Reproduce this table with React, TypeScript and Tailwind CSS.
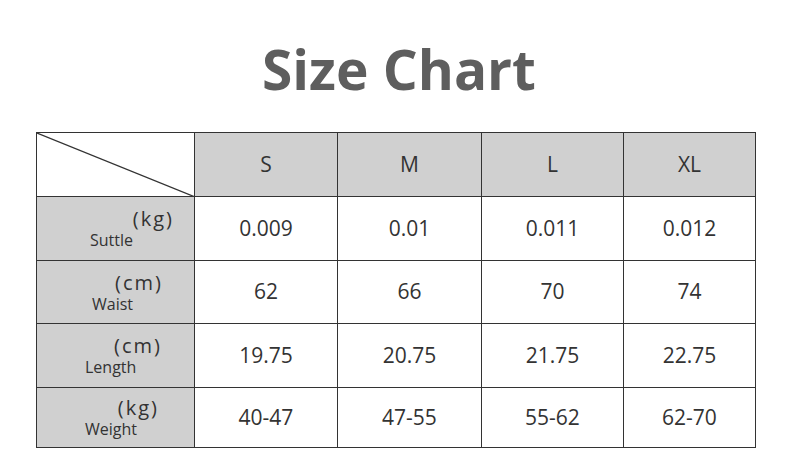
import React from "react";

const cols = ["S", "M", "L", "XL"];
const widths = ["w-[143px]", "w-[144px]", "w-[142px]", "w-[132px]"];

const rows = [
  { unit: "(kg)", label: "Suttle", h: "h-[64px]", unitPr: "pr-[20px]", labelPl: "pl-[53px]", values: ["0.009", "0.01", "0.011", "0.012"] },
  { unit: "(cm)", label: "Waist", h: "h-[63px]", unitPr: "pr-[31px]", labelPl: "pl-[55px]", values: ["62", "66", "70", "74"] },
  { unit: "(cm)", label: "Length", h: "h-[64px]", unitPr: "pr-[32px]", labelPl: "pl-[48px]", values: ["19.75", "20.75", "21.75", "22.75"] },
  { unit: "(kg)", label: "Weight", h: "h-[60px]", unitPr: "pr-[35px]", labelPl: "pl-[48px]", values: ["40-47", "47-55", "55-62", "62-70"] },
];

export default function App() {
  return (
    <div className="w-[790px] h-[469px] bg-white overflow-hidden" style={{ fontFamily: '"Open Sans", "Noto Sans", sans-serif' }}>
      <div className="h-[132px] flex justify-center pt-[34px] pl-[8px]">
        <h1 className="text-[55px] leading-[70px] font-bold text-[#5e5e5e]">Size Chart</h1>
      </div>
      <div className="ml-[36px] w-[720px] border-l border-t border-[#333] text-[#333]">
        <div className="flex h-[64px]">
          <div className="relative w-[158px] border-r border-b border-[#333] bg-white">
            <svg className="absolute inset-0" width="158" height="64" viewBox="0 0 158 64">
              <line x1="0" y1="0" x2="158" y2="64" stroke="#333" strokeWidth="1.2" />
            </svg>
          </div>
          {cols.map((c, i) => (
            <div key={c} className={`${widths[i]} border-r border-b border-[#333] bg-[#d0d0d0] flex items-center justify-center text-[21px]`}>
              {c}
            </div>
          ))}
        </div>
        {rows.map((r) => (
          <div key={r.label} className={`flex ${r.h}`}>
            <div className="w-[158px] border-r border-b border-[#333] bg-[#d0d0d0] flex flex-col justify-center">
              <div className={`text-right text-[20px] leading-[23px] ${r.unitPr}`}>
                <span className="tracking-[2px]">{r.unit}</span>
              </div>
              <div className={`text-[16px] leading-[20px] ${r.labelPl}`}>{r.label}</div>
            </div>
            {r.values.map((v, i) => (
              <div key={i} className={`${widths[i]} border-r border-b border-[#333] bg-white flex items-center justify-center text-[21px]`}>
                {v}
              </div>
            ))}
          </div>
        ))}
      </div>
    </div>
  );
}
